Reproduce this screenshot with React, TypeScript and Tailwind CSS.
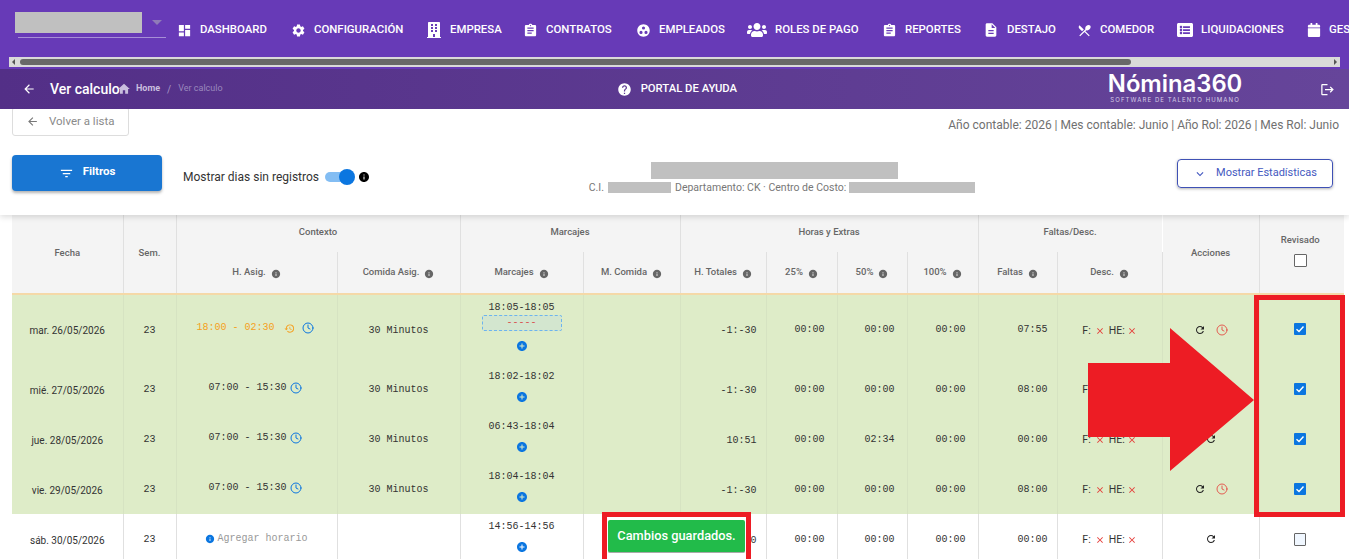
import { ReactNode } from 'react';
import {
  MdAddCircle,
  MdArrowBack,
  MdAssignment,
  MdClose,
  MdDashboard,
  MdDescription,
  MdExpandMore,
  MdFilterList,
  MdGroupWork,
  MdHelp,
  MdHistory,
  MdHome,
  MdInfo,
  MdLogout,
  MdRefresh,
  MdRestaurantMenu,
  MdSettings,
} from 'react-icons/md';
import { FaBuilding, FaCalendar, FaListAlt, FaUsers } from 'react-icons/fa';
import { Clock } from 'lucide-react';

const navItems = [
  { label: 'Dashboard', icon: <MdDashboard size={15} />, width: 'w-[114px]' },
  { label: 'Configuración', icon: <MdSettings size={15} />, width: 'w-[135px]' },
  { label: 'Empresa', icon: <FaBuilding size={16} />, width: 'w-[97px]' },
  { label: 'Contratos', icon: <MdAssignment size={15} />, width: 'w-[113px]' },
  { label: 'Empleados', icon: <MdGroupWork size={15} />, width: 'w-[111px]' },
  { label: 'Roles de pago', icon: <FaUsers size={20} />, width: 'w-[135px]' },
  { label: 'Reportes', icon: <MdAssignment size={15} />, width: 'w-[101px]' },
  { label: 'Destajo', icon: <MdDescription size={16} />, width: 'w-[94px]' },
  { label: 'Comedor', icon: <MdRestaurantMenu size={15} />, width: 'w-[100px]' },
  { label: 'Liquidaciones', icon: <FaListAlt size={16} />, width: 'w-[130px]' },
  { label: 'Gestión', icon: <FaCalendar size={14} />, width: 'w-[100px]' },
];

const rows = [
  { date: 'mar. 26/05/2026', schedule: '18:00 - 02:30', late: true, meal: '30 Minutos', marks: '18:05-18:05', dashed: true, total: '-1:-30', p50: '00:00', faltas: '07:55', alarm: true },
  { date: 'mié. 27/05/2026', schedule: '07:00 - 15:30', meal: '30 Minutos', marks: '18:02-18:02', total: '-1:-30', p50: '00:00', faltas: '08:00', alarm: true },
  { date: 'jue. 28/05/2026', schedule: '07:00 - 15:30', meal: '30 Minutos', marks: '06:43-18:04', total: '10:51', p50: '02:34', faltas: '00:00' },
  { date: 'vie. 29/05/2026', schedule: '07:00 - 15:30', meal: '30 Minutos', marks: '18:04-18:04', total: '-1:-30', p50: '00:00', faltas: '08:00', alarm: true },
  { date: 'sáb. 30/05/2026', marks: '14:56-14:56', total: '0:00', p50: '00:00', faltas: '00:00', free: true },
];

function HeadLabel({ children }: { children: ReactNode }) {
  return (
    <span className="inline-flex items-center gap-[5px]">
      {children}
      <MdInfo size={10} className="text-[#666666] mt-[2px]" />
    </span>
  );
}

function Th({ children, className = '', colSpan, rowSpan }: { children: ReactNode; className?: string; colSpan?: number; rowSpan?: number }) {
  return (
    <th colSpan={colSpan} rowSpan={rowSpan} className={`border-r border-[#e0e0e0] font-medium text-[9.5px] text-[#666666] p-0 ${className}`}>
      {children}
    </th>
  );
}

function Mono({ children, className = '' }: { children: ReactNode; className?: string }) {
  return <span className={`font-['Liberation_Mono',monospace] text-[10px] leading-[12px] ${className}`}>{children}</span>;
}

export default function App() {
  return (
    <div className="relative h-[559px] w-[1349px] overflow-hidden bg-white font-['Roboto',sans-serif]">
      <header className="h-[69px] bg-[#673ab7] flex flex-col">
        <div className="h-[57px] flex items-start">
          <div className="w-[177px] shrink-0 pl-[15px] pt-[12px] relative">
            <div className="w-[127px] h-[21px] bg-[#c0c0c0]" />
            <span className="absolute left-[152px] top-[20px] border-x-[5px] border-t-[5px] border-x-transparent border-t-[#8f7bb8]" />
            <div className="ml-[3px] mt-[4px] w-[148px] h-px bg-[#a78fd6]" />
          </div>
          <nav className="flex pt-[21px] overflow-hidden text-white text-[11.4px] font-medium uppercase">
            {navItems.map((item) => (
              <div key={item.label} className={`flex items-center gap-[8px] h-[18px] shrink-0 ${item.width}`}>
                {item.icon}
                <span className="whitespace-nowrap">{item.label}</span>
              </div>
            ))}
          </nav>
        </div>
        <div className="h-[10px] mx-[9px] bg-[#d9d9d9] flex items-center relative">
          <span className="absolute left-[3px] border-y-[3px] border-r-[3px] border-y-transparent border-r-[#555555]" />
          <div className="ml-[11px] w-[1111px] h-[6px] rounded-full bg-[#686868]" />
          <span className="absolute right-[3px] border-y-[3px] border-l-[3px] border-y-transparent border-l-[#555555]" />
        </div>
      </header>

      <div className="h-[40px] bg-gradient-to-r from-[#532f87] to-[#66459a] flex items-center text-white relative z-20">
        <MdArrowBack size={14} className="ml-[22px]" />
        <span className="ml-[14px] text-[14px] font-medium w-[68px] whitespace-nowrap">Ver calculo</span>
        <MdHome size={14} className="-ml-[1px] text-[#c9bede]" />
        <span className="ml-[5px] text-[9px] font-bold text-[#c9bede]">Home</span>
        <span className="ml-[7px] text-[10px] text-[#a797c6]">/</span>
        <span className="ml-[7px] text-[9px] text-[#9a88bd]">Ver calculo</span>
        <MdHelp size={15} className="ml-[394px]" />
        <span className="ml-[9px] text-[11.3px] font-medium uppercase whitespace-nowrap">Portal de ayuda</span>
        <div className="ml-[371px] -mt-[2px] flex flex-col items-center w-[134px]">
          <span className="text-[23.8px] leading-[24px] font-semibold font-['Inter',sans-serif] whitespace-nowrap">Nómina360</span>
          <span className="text-[6px] leading-[8px] tracking-[1.1px] text-[#d5cbe6] font-['Inter',sans-serif] whitespace-nowrap">SOFTWARE DE TALENTO HUMANO</span>
        </div>
        <MdLogout size={15} className="ml-[78px]" />
      </div>

      <section className="relative z-10 h-[106px] bg-white shadow-[0_2px_6px_rgba(0,0,0,0.14)]">
        <div className="flex items-start justify-between pl-[12px] pr-[10px]">
          <div className="-mt-[2px] w-[117px] h-[29px] border border-[#dddddd] rounded-[3px] flex items-center text-[#8a8a8a] text-[11.5px]">
            <MdArrowBack size={13} className="ml-[13px] text-[#777777]" />
            <span className="ml-[10px]">Volver a lista</span>
          </div>
          <p className="mt-[8px] text-[12px] leading-[16px] text-[#707070] whitespace-nowrap">
            Año contable: 2026 | Mes contable: Junio | Año Rol: 2026 | Mes Rol: Junio
          </p>
        </div>

        <div className="flex items-start mt-[19px] pl-[12px] pr-[16px]">
          <button className="w-[150px] h-[36px] rounded bg-[#1976d2] text-white text-[11.5px] font-bold flex items-center justify-center gap-[9px] shadow-[0_2px_3px_rgba(0,0,0,0.3)]">
            <MdFilterList size={15} />
            <span className="-mt-[2px]">Filtros</span>
          </button>
          <span className="ml-[21px] mt-[14px] text-[12px] leading-[16px] text-[#333333] whitespace-nowrap">Mostrar dias sin registros</span>
          <div className="ml-[6px] mt-[13px] relative w-[28px] h-[18px] flex items-center">
            <div className="w-[26px] h-[10px] rounded-full bg-[#83bdf3]" />
            <div className="absolute left-[14px] top-px w-[16px] h-[16px] rounded-full bg-[#0b76e0]" />
          </div>
          <MdInfo size={12} className="ml-[5px] mt-[16px] text-black" />
          <div className="w-[650px] ml-[87px] flex flex-col items-center -mt-[2px] shrink-0">
            <div className="w-[247px] h-[17px] mt-[9px] mr-[15px] bg-[#c0c0c0]" />
            <div className="mt-[3px] flex items-center text-[10.5px] leading-[11px] text-[#777777] whitespace-nowrap">
              <span>C.I. </span>
              <span className="ml-[4px] w-[63px] h-[11px] bg-[#c0c0c0]" />
              <span className="ml-[4px]">Departamento: CK · Centro de Costo:</span>
              <span className="ml-[3px] w-[126px] h-[11px] bg-[#c0c0c0]" />
            </div>
          </div>
          <button className="ml-auto w-[156px] h-[29px] mt-[4px] rounded border border-[#3f51b5] text-[#4459c0] text-[11px] flex items-center justify-center gap-[9px] shadow-[0_1px_3px_rgba(0,0,0,0.3)]">
            <MdExpandMore size={14} />
            Mostrar Estadísticas
          </button>
        </div>
      </section>

      <div className="pl-[12px]">
        <table className="table-fixed w-[1332px] text-center">
          <colgroup>
            {[111, 53, 161, 123, 123, 97, 86, 71, 70, 71, 79, 105, 97, 85].map((w, i) => (
              <col key={i} style={{ width: w }} />
            ))}
          </colgroup>
          <thead className="bg-[#f4f4f4]">
            <tr className="h-[37px]">
              <Th rowSpan={2} className="pb-[2px]">Fecha</Th>
              <Th rowSpan={2} className="pb-[2px]">Sem.</Th>
              <Th colSpan={2} className="pb-[2px]">Contexto</Th>
              <Th colSpan={2} className="pb-[2px]">Marcajes</Th>
              <Th colSpan={4} className="pb-[2px]">Horas y Extras</Th>
              <Th colSpan={2} className="border-r-white pb-[2px]">Faltas/Desc.</Th>
              <Th rowSpan={2} className="pb-[2px]">Acciones</Th>
              <Th rowSpan={2} className="border-r-0 pb-[8px] pr-[3px]">
                <div className="flex flex-col items-center gap-[7px]">
                  Revisado
                  <span className="w-[13px] h-[13px] border border-[#666666] rounded-[1px] bg-white" />
                </div>
              </Th>
            </tr>
            <tr className="h-[42px] border-b-2 border-[#f5d9a8]">
              <Th><HeadLabel>H. Asig.</HeadLabel></Th>
              <Th><HeadLabel>Comida Asig.</HeadLabel></Th>
              <Th><HeadLabel>Marcajes</HeadLabel></Th>
              <Th><HeadLabel>M. Comida</HeadLabel></Th>
              <Th><HeadLabel>H. Totales</HeadLabel></Th>
              <Th><HeadLabel>25%</HeadLabel></Th>
              <Th><HeadLabel>50%</HeadLabel></Th>
              <Th><HeadLabel>100%</HeadLabel></Th>
              <Th><HeadLabel>Faltas</HeadLabel></Th>
              <Th><HeadLabel>Desc.</HeadLabel></Th>
            </tr>
          </thead>
          <tbody className="text-[#333333]">
            {rows.map((row, i) => {
              const line = row.free ? 'border-[#e0e0e0]' : 'border-[#d6e3c2]';
              const cell = `border-r ${line} p-0`;
              return (
                <tr key={row.date} className={`${i === 0 ? 'h-[70px]' : 'h-[50px]'} ${row.free ? 'bg-white' : 'bg-[#deecc8]'}`}>
                  <td className={`${cell} text-[10px] pt-[2px]`}>{row.date}</td>
                  <td className={`${cell} pb-[4px]`}><Mono>23</Mono></td>
                  <td className={`${cell} pb-[3px] pr-[3px]`}>
                    {row.schedule ? (
                      <div className={`flex items-center justify-center ${row.late ? 'text-[#f5a020]' : 'text-[#333333]'}`}>
                        <Mono>{row.schedule}</Mono>
                        {row.late && <MdHistory size={11} className="ml-[9px]" />}
                        <Clock size={12} strokeWidth={2} className={`${row.late ? 'ml-[7px]' : 'ml-[3px]'} text-[#0b76e0]`} />
                      </div>
                    ) : (
                      <div className="flex items-center justify-center gap-[2px] pt-[3px] pl-[3px]">
                        <MdInfo size={10} className="text-[#0b76e0]" />
                        <Mono className="text-[#999999]">Agregar horario</Mono>
                      </div>
                    )}
                  </td>
                  <td className={`${cell} pb-[4px]`}>{row.meal && <Mono>{row.meal}</Mono>}</td>
                  <td className={`${cell} align-top pt-[7px]`}>
                    <div className="flex flex-col items-center">
                      <Mono>{row.marks}</Mono>
                      {row.dashed && (
                        <div className="mt-[1px] w-[80px] h-[16px] border border-dashed border-[#6db4ee] rounded-[2px] bg-[#d3e6cf] flex items-center justify-center">
                          <Mono className="text-[#d9534f]">-----</Mono>
                        </div>
                      )}
                      <MdAddCircle size={12} className={`${row.dashed ? 'mt-[9px]' : 'mt-[8px]'} text-[#0b76e0]`} />
                    </div>
                  </td>
                  <td className={cell} />
                  <td className={`${cell} text-right pr-[9px] pb-[3px]`}><Mono>{row.total}</Mono></td>
                  <td className={`${cell} text-right pr-[12px] pb-[5px]`}><Mono>00:00</Mono></td>
                  <td className={`${cell} text-right pr-[12px] pb-[5px]`}><Mono>{row.p50}</Mono></td>
                  <td className={`${cell} text-right pr-[12px] pb-[5px]`}><Mono>00:00</Mono></td>
                  <td className={`${cell} text-right pr-[9px] pb-[5px]`}><Mono>{row.faltas}</Mono></td>
                  <td className={`${cell} text-[10.5px] pt-[2px]`}>
                    <div className="flex items-center justify-center">
                      F:
                      <MdClose size={10} className="mx-[4px] text-[#e53935]" />
                      HE:
                      <MdClose size={10} className="ml-[2px] text-[#e53935]" />
                    </div>
                  </td>
                  <td className={cell}>
                    <div className="flex items-center justify-center gap-[10px]">
                      <MdRefresh size={12} className="text-[#222222]" />
                      {row.alarm && <Clock size={12} strokeWidth={1.6} className="text-[#e53935]" />}
                    </div>
                  </td>
                  <td className={`p-0 pr-[3px] ${row.free ? '' : 'pb-[2px]'}`}>
                    {row.free ? (
                      <span className="inline-block w-[12px] h-[13px] border border-[#666666] bg-[#f0f7ff] rounded-[1px] align-middle" />
                    ) : (
                      <span className="inline-flex w-[12px] h-[12px] rounded-[1px] bg-[#0b76e0] items-center justify-center align-middle">
                        <svg viewBox="0 0 12 12" className="w-[12px] h-[12px]" fill="none" stroke="white" strokeWidth="1.4">
                          <path d="M2.5 6.2 5 8.5 9.5 3.5" />
                        </svg>
                      </span>
                    )}
                  </td>
                </tr>
              );
            })}
          </tbody>
        </table>
      </div>

      {/* annotations drawn on top of the capture */}
      <div className="absolute left-[1254px] top-[295px] w-[91px] h-[222px] border-[5px] border-[#ed1c24]" />
      <svg className="absolute left-[1088px] top-[328px] w-[166px] h-[143px]" viewBox="0 0 166 143">
        <polygon points="0,35 82,35 82,0 166,72 82,143 82,109 0,109" fill="#ed1c24" />
      </svg>
      <div className="absolute left-[602px] top-[512px] w-[149px] h-[47px] border-[5px] border-b-0 border-[#ed1c24] bg-white">
        <div className="mx-[1px] mt-[3px] h-[33px] rounded-[2px] bg-[#22bb4a] border-b border-[#a9a9a9] text-white text-[12.8px] font-medium flex items-center justify-center whitespace-nowrap">
          Cambios guardados.
        </div>
      </div>
    </div>
  );
}
